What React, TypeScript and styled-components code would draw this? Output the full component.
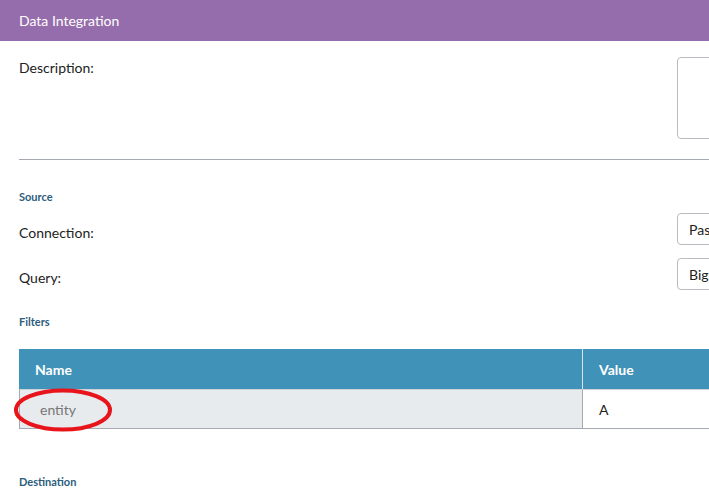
import React from "react";
import styled, { createGlobalStyle } from "styled-components";

const GlobalStyle = createGlobalStyle`
  body {
    margin: 0;
    font-family: Lato, "Open Sans", sans-serif;
    background: #fff;
    overflow: hidden;
  }
`;

const Page = styled.div`
  width: 1000px;
  color: #222;
`;

const TitleBar = styled.div`
  height: 41px;
  display: flex;
  align-items: center;
  padding-left: 19px;
  background: #966dac;
  color: #fff;
  font-size: 14px;
`;

const Body = styled.div`
  padding: 16px 0 0 19px;
`;

const FormRow = styled.div<{ $gap?: number }>`
  display: grid;
  grid-template-columns: 658px 1fr;
  align-items: start;
  margin-bottom: ${(p) => p.$gap ?? 0}px;
`;

const Label = styled.div<{ $offset?: number }>`
  font-size: 14px;
  line-height: 20px;
  padding-top: ${(p) => p.$offset ?? 0}px;
`;

const TextArea = styled.div`
  height: 80px;
  border: 1px solid #b9bcc1;
  border-radius: 4px;
`;

const Input = styled.div`
  height: 30px;
  border: 1px solid #b9bcc1;
  border-radius: 4px;
  display: flex;
  align-items: center;
  padding-left: 11px;
  font-size: 14px;
  white-space: nowrap;
`;

const Divider = styled.hr`
  border: none;
  border-top: 1px solid #a5a9b0;
  margin: 20px 0 30px;
`;

const SectionTitle = styled.div<{ $gap: number }>`
  font-size: 11px;
  line-height: 14px;
  font-weight: bold;
  color: #2c5d7c;
  margin-bottom: ${(p) => p.$gap}px;
`;

const TableWrap = styled.div`
  position: relative;
  margin-bottom: 46px;
`;

const Table = styled.div`
  display: grid;
  grid-template-columns: 563px 1fr;
`;

const HeadCell = styled.div<{ $divider?: boolean }>`
  height: 40px;
  display: flex;
  align-items: center;
  padding-left: 16px;
  background: #4192b9;
  color: #fff;
  font-size: 14px;
  font-weight: bold;
  border-left: ${(p) => (p.$divider ? "1px solid #d7e6ee" : "none")};
`;

const Cell = styled.div<{ $name?: boolean }>`
  height: 40px;
  display: flex;
  align-items: center;
  font-size: 14px;
  border-bottom: 1px solid #a5a9b0;
  border-top: 1px solid #cfd3d8;
  box-sizing: border-box;
  background: ${(p) => (p.$name ? "#e8ebee" : "#fff")};
  color: ${(p) => (p.$name ? "#767676" : "#222")};
  padding-left: ${(p) => (p.$name ? 20 : 16)}px;
  border-left: 1px solid #a5a9b0;
`;

const Highlight = styled.svg`
  position: absolute;
  left: -6px;
  top: 39px;
  pointer-events: none;
`;

export default function App() {
  return (
    <Page>
      <GlobalStyle />
      <TitleBar>Data Integration</TitleBar>
      <Body>
        <FormRow>
          <Label $offset={1}>Description:</Label>
          <TextArea />
        </FormRow>
        <Divider />
        <SectionTitle $gap={9}>Source</SectionTitle>
        <FormRow $gap={13}>
          <Label $offset={10}>Connection:</Label>
          <Input>Pass</Input>
        </FormRow>
        <FormRow $gap={25}>
          <Label $offset={10}>Query:</Label>
          <Input>Big</Input>
        </FormRow>
        <SectionTitle $gap={20}>Filters</SectionTitle>
        <TableWrap>
          <Table>
            <HeadCell>Name</HeadCell>
            <HeadCell $divider>Value</HeadCell>
            <Cell $name>entity</Cell>
            <Cell>A</Cell>
          </Table>
          <Highlight width="102" height="46" viewBox="0 0 102 46">
            <ellipse cx="50" cy="22" rx="47" ry="19.5" fill="none" stroke="#e8141b" strokeWidth="4" />
          </Highlight>
        </TableWrap>
        <SectionTitle $gap={0}>Destination</SectionTitle>
      </Body>
    </Page>
  );
}
